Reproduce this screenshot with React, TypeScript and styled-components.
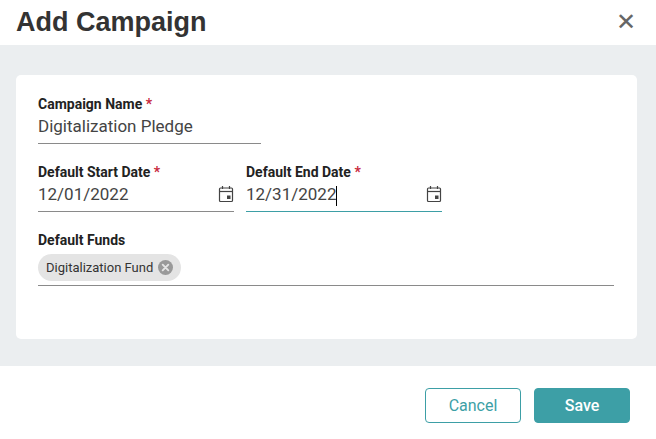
import React from "react";
import styled, { createGlobalStyle } from "styled-components";

const G = createGlobalStyle`
  body { margin: 0; font-family: Roboto, "Liberation Sans", Arial, sans-serif; background: #fff; }
`;
const TEAL = "#3d9fa6";

const Header = styled.div`
  height: 45px; display: flex; align-items: center; justify-content: space-between;
  padding: 0 20px 0 16px;
`;
const Title = styled.h1`
  margin: 0; font-family: "Liberation Sans", Arial, sans-serif; font-size: 27px; font-weight: 700; color: #333;
`;
const Close = styled.span`font-size: 24px; color: #666; font-family: "DejaVu Sans", sans-serif; line-height: 1; margin-top: -2px;`;
const Body = styled.div`background: #ebeef0; padding: 30px 19px 27px 16px; height: 264px;`;
const Card = styled.div`
  background: #fff; border-radius: 5px; height: 264px; box-sizing: border-box; padding: 20px 23px 0 22px;
  display: flex; flex-direction: column; gap: 19px;
`;
const Row = styled.div`display: flex; gap: 12px;`;
const Field = styled.div<{ w: number; focus?: boolean }>`
  width: ${(p) => p.w}px;
  border-bottom: 1px solid ${(p) => (p.focus ? TEAL : "#8a8a8a")};
  padding-bottom: 4px;
`;
const Label = styled.div`font-size: 14px; font-weight: 700; color: #222; line-height: 18px; span { color: #c8283c; }`;
const Value = styled.div`
  font-size: 17px; color: #444; line-height: 26px; height: 26px; display: flex; align-items: center; justify-content: space-between;
`;
const Caret = styled.span`display: inline-block; width: 1px; height: 20px; background: #000; vertical-align: middle;`;
const Chip = styled.div`
  display: inline-flex; align-items: center; gap: 5px; background: #e4e4e4; border-radius: 14px;
  height: 27px; padding: 0 8px; font-size: 13px; color: #333; margin-top: 5px;
`;
const Footer = styled.div`display: flex; justify-content: flex-end; gap: 13px; padding: 22px 26px 0 0;`;
const Btn = styled.button<{ primary?: boolean }>`
  width: 96px; height: 35px; border-radius: 4px; font-size: 16px; font-family: Roboto, "Liberation Sans", Arial, sans-serif;
  border: 1px solid ${TEAL}; background: ${(p) => (p.primary ? TEAL : "#fff")};
  color: ${(p) => (p.primary ? "#fff" : TEAL)}; font-weight: ${(p) => (p.primary ? 500 : 400)};
`;

const Cal = () => (
  <svg width="16" height="18" viewBox="0 0 16 18" fill="none" stroke="#444" strokeWidth="1.2">
    <rect x="1.5" y="3" width="13" height="13.5" rx="1" />
    <line x1="1.5" y1="6.5" x2="14.5" y2="6.5" />
    <line x1="4.5" y1="1" x2="4.5" y2="4" />
    <line x1="11.5" y1="1" x2="11.5" y2="4" />
    <rect x="9" y="10.5" width="3.5" height="3.5" fill="#444" stroke="none" />
  </svg>
);
const X = () => (
  <svg width="15" height="15" viewBox="0 0 16 16">
    <circle cx="8" cy="8" r="8" fill="#999" />
    <path d="M5 5l6 6M11 5l-6 6" stroke="#e4e4e4" strokeWidth="2" strokeLinecap="round" />
  </svg>
);

export default function App() {
  return (
    <>
      <G />
      <Header>
        <Title>Add Campaign</Title>
        <Close>✕</Close>
      </Header>
      <Body>
        <Card>
          <Field w={223}>
            <Label>Campaign Name <span>*</span></Label>
            <Value>Digitalization Pledge</Value>
          </Field>
          <Row>
            <Field w={196}>
              <Label>Default Start Date <span>*</span></Label>
              <Value>12/01/2022<Cal /></Value>
            </Field>
            <Field w={196} focus>
              <Label>Default End Date <span>*</span></Label>
              <Value><span>12/31/2022<Caret /></span><Cal /></Value>
            </Field>
          </Row>
          <Field w={576}>
            <Label>Default Funds</Label>
            <Chip>Digitalization Fund <X /></Chip>
          </Field>
        </Card>
      </Body>
      <Footer>
        <Btn>Cancel</Btn>
        <Btn primary>Save</Btn>
      </Footer>
    </>
  );
}
